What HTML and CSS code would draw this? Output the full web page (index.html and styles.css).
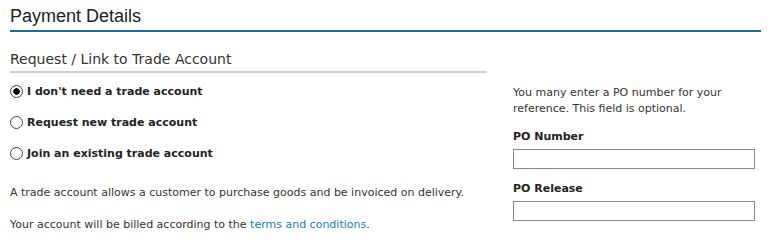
FILE: index.html
```html
<!DOCTYPE html>
<html lang="en">
<head>
    <meta charset="UTF-8">
    <meta name="viewport" content="width=device-width, initial-scale=1.0">
    <title>Payment Details</title>
    <link rel="stylesheet" href="styles.css">
</head>
<body>
    <div class="page">
        <h1 class="title">Payment Details</h1>
        <div class="columns">
            <div class="left">
                <h2 class="subtitle">Request / Link to Trade Account</h2>
                <label class="option"><input type="radio" name="trade" checked> I don't need a trade account</label>
                <label class="option"><input type="radio" name="trade"> Request new trade account</label>
                <label class="option"><input type="radio" name="trade"> Join an existing trade account</label>
                <p class="note">A trade account allows a customer to purchase goods and be invoiced on delivery.</p>
                <p class="note">Your account will be billed according to the <a href="#">terms and conditions</a>.</p>
            </div>
            <div class="right">
                <p class="hint">You many enter a PO number for your reference. This field is optional.</p>
                <label class="field-label" for="po-number">PO Number</label>
                <input class="field" type="text" id="po-number">
                <label class="field-label" for="po-release">PO Release</label>
                <input class="field" type="text" id="po-release">
            </div>
        </div>
    </div>
</body>
</html>
```

FILE: styles.css
```css
body{
    margin: 0;
    background-color: white;
    font-family: "DejaVu Sans", Verdana, sans-serif;
    font-size: 11px;
    color: #333;
}
.page{
    padding: 0 10px;
}
.title{
    margin: 0;
    padding-top: 6px;
    height: 24px;
    font-family: "Liberation Sans", Arial, sans-serif;
    font-weight: normal;
    font-size: 18px;
    color: #222;
    border-bottom: 2px solid #1b6fa0;
}
.columns{
    display: grid;
    grid-template-columns: 477px 242px;
    column-gap: 26px;
}
.subtitle{
    margin: 19px 0 0 0;
    padding-bottom: 4px;
    font-weight: normal;
    font-size: 14px;
    color: #333;
    border-bottom: 2px solid #ccc;
}
.option{
    display: flex;
    align-items: center;
    height: 31px;
    font-weight: bold;
    color: #222;
}
.option:first-of-type{
    margin-top: 3px;
}
.option input{
    appearance: none;
    box-sizing: border-box;
    margin: 0 4px 0 0;
    width: 13px;
    height: 13px;
    border: 1px solid #444;
    border-radius: 50%;
    background: white;
}
.option input:checked{
    background: radial-gradient(circle, #000 0 3px, white 3.5px);
}
.note{
    margin: 17px 0 0 0;
}
.note + .note{
    margin-top: 19px;
}
a{
    color: #1a7ab5;
    text-decoration: none;
}
.hint{
    margin: 53px 0 0 0;
    line-height: 16px;
}
.field-label{
    display: block;
    margin-top: 13px;
    font-weight: bold;
    color: #222;
}
.field{
    display: block;
    box-sizing: border-box;
    margin-top: 6px;
    width: 242px;
    height: 20px;
    border: 1px solid #888;
}
```
